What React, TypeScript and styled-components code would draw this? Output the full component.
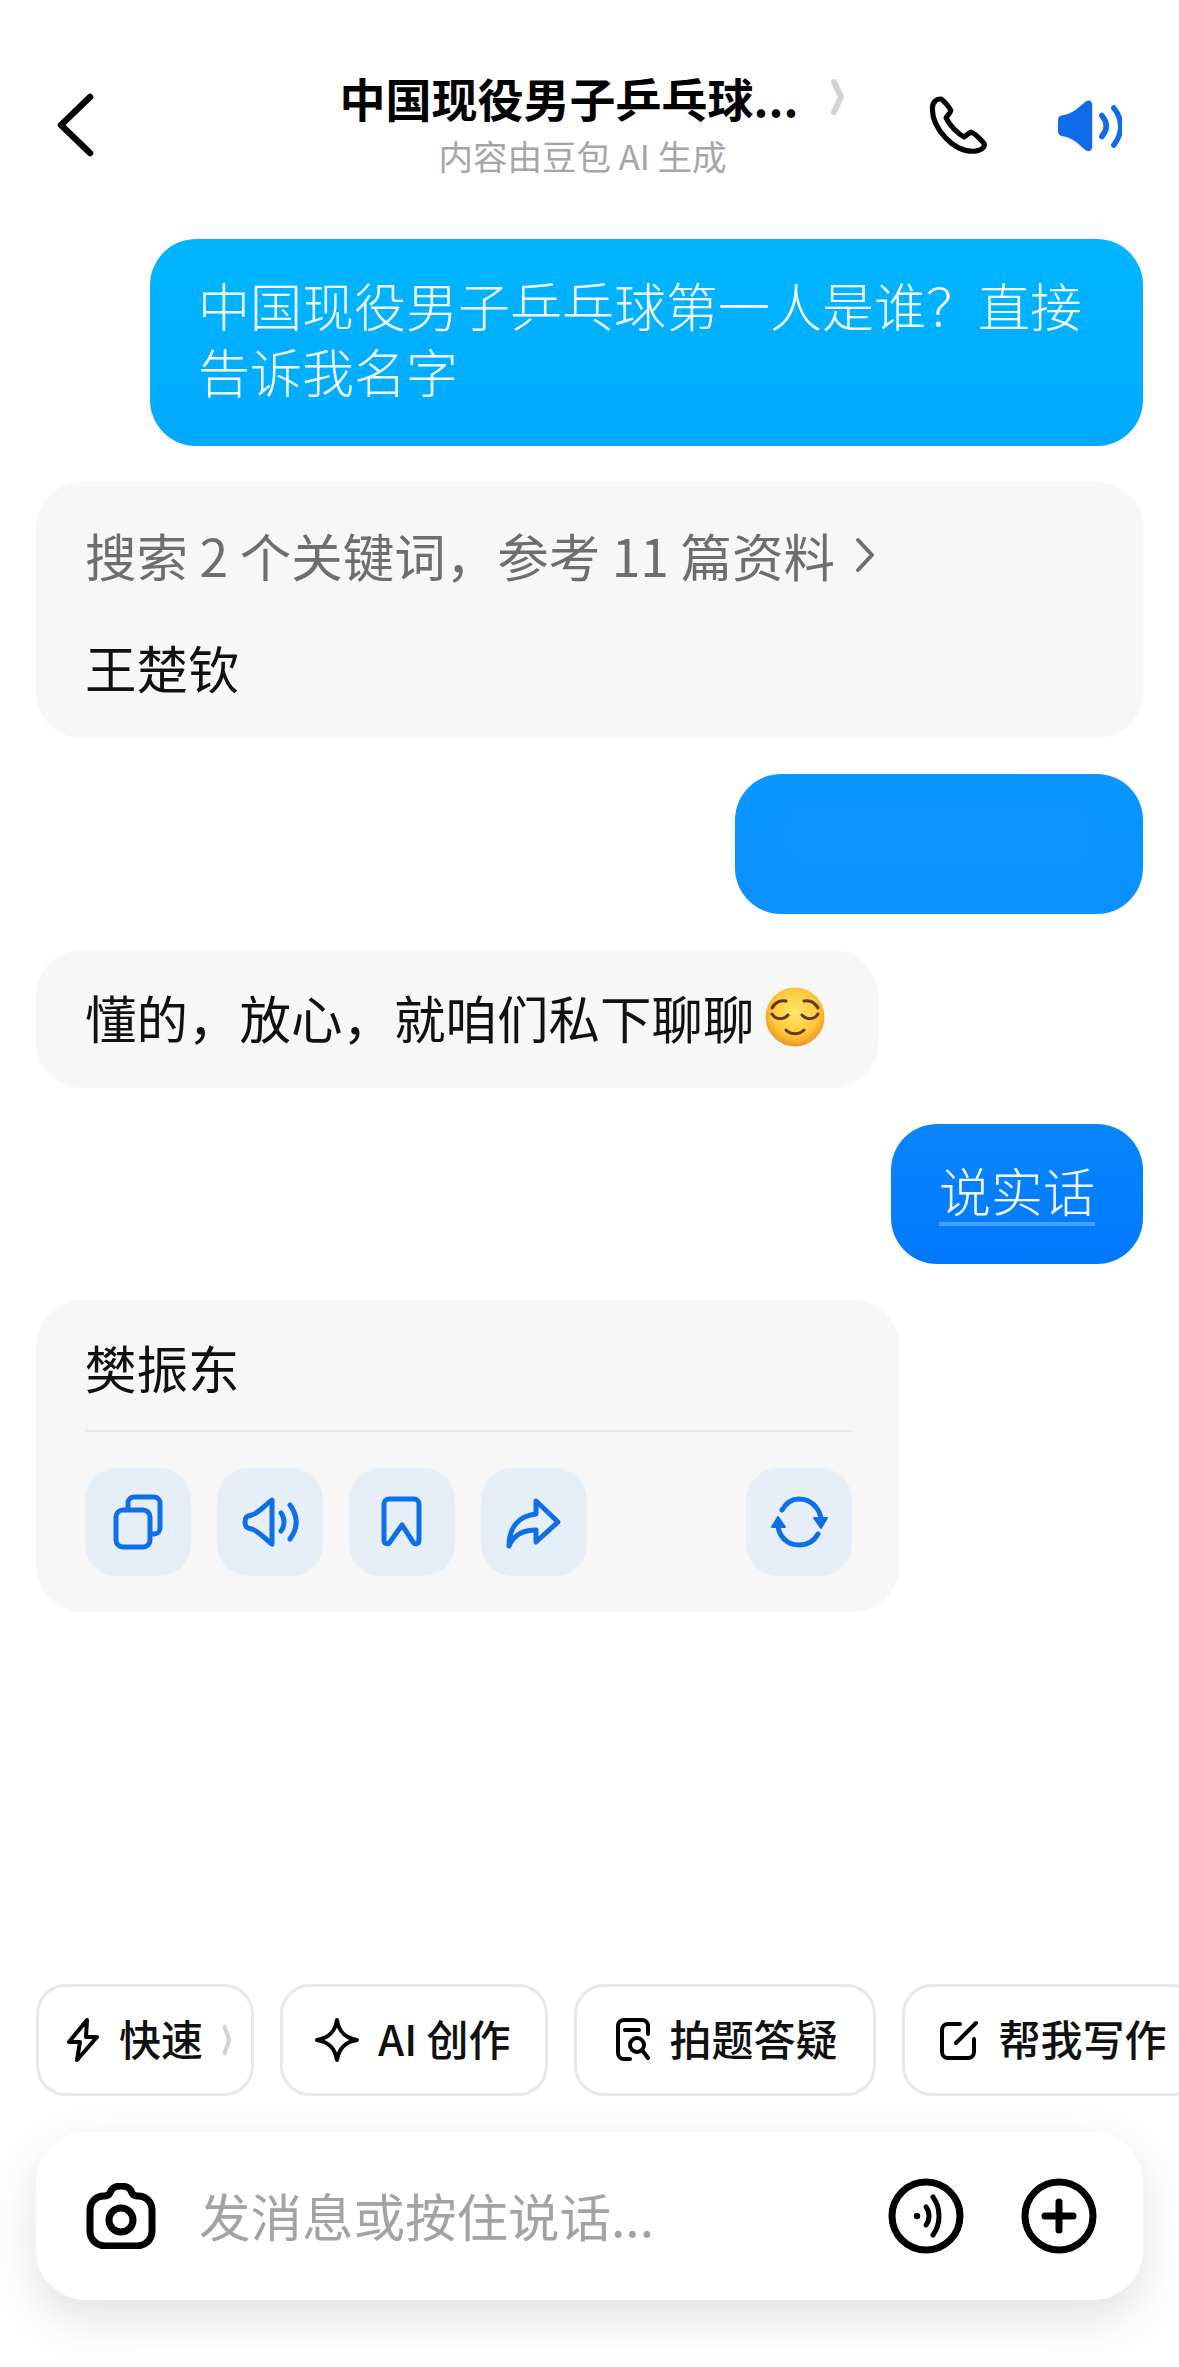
import React from 'react';
import styled, { createGlobalStyle } from 'styled-components';

const GlobalStyle = createGlobalStyle`
  html, body {
    margin: 0;
    padding: 0;
    background: #fff;
  }
  body {
    font-family: "Noto Sans CJK SC", "Noto Sans", sans-serif;
    color: #111;
  }
`;

const Page = styled.div`
  width: 1179px;
  height: 2367px;
  box-sizing: border-box;
  display: flex;
  flex-direction: column;
  overflow: hidden;
  background: #fff;
`;

const Header = styled.header`
  height: 239px;
  box-sizing: border-box;
  padding: 67px 36px 0 56px;
  display: grid;
  grid-template-columns: 176px 1fr 224px;
  align-items: start;
`;

const BackCell = styled.div`
  padding-top: 26px;
`;

const TitleBlock = styled.div`
  display: flex;
  flex-direction: column;
  align-items: center;
`;

const TitleRow = styled.div`
  display: flex;
  align-items: center;
  gap: 32px;
  height: 60px;
  margin-left: 34px;
`;

const Title = styled.h1`
  margin: 0;
  font-size: 46px;
  line-height: 60px;
  font-weight: 700;
  color: #000;
  white-space: nowrap;
`;

const Subtitle = styled.div`
  margin: 6px 0 0 14px;
  font-size: 34.5px;
  line-height: 44px;
  color: #a6a6a6;
  white-space: nowrap;
`;

const HeaderActions = styled.div`
  display: flex;
  justify-content: flex-end;
  align-items: center;
  gap: 70px;
  padding: 29px 21px 0 0;
`;

const Icon = styled.svg<{ $w: number; $h: number; $color?: string }>`
  width: ${({ $w }) => $w}px;
  height: ${({ $h }) => $h}px;
  flex: none;
  display: block;
  color: ${({ $color }) => $color || '#000'};
  fill: none;
  stroke: currentColor;
  stroke-linecap: round;
  stroke-linejoin: round;
`;

const Messages = styled.main`
  display: flex;
  flex-direction: column;
  gap: 36px;
  padding: 0 36px;
`;

const UserBubble = styled.div<{ $bg: string }>`
  align-self: flex-end;
  box-sizing: border-box;
  max-width: 993px;
  padding: 33px 48px 41px;
  border-radius: 46px;
  background: ${({ $bg }) => $bg};
  color: #f4fbff;
  font-size: 52px;
  line-height: 66px;
  font-weight: 300;

  &:first-child {
    padding-bottom: 42px;
  }
`;

const BlurredText = styled.div`
  width: 312px;
  height: 66px;
  border-radius: 20px;
  background: rgba(120, 190, 255, 0.05);
  filter: blur(10px);
`;

const UnderlinedText = styled.span`
  text-decoration: underline;
  text-decoration-color: #4aa0ff;
  text-decoration-thickness: 4px;
  text-underline-offset: 10px;
  text-decoration-skip-ink: none;
`;

const BotBubble = styled.div<{ $width?: number }>`
  align-self: flex-start;
  box-sizing: border-box;
  width: ${({ $width }) => ($width ? `${$width}px` : '100%')};
  padding: 34px 47px 38px 49px;
  border-radius: 46px;
  background: #f7f7f7;
  color: #111;
  font-size: 51.5px;
  line-height: 66px;
`;

const SearchRow = styled.div`
  display: flex;
  align-items: center;
  gap: 20px;
  margin: 6px 0 46px;
  color: #6e6e6e;
  white-space: nowrap;
`;

const InlineRow = styled.div`
  display: flex;
  align-items: center;
  gap: 10px;
  white-space: nowrap;
`;

const Divider = styled.div`
  height: 2px;
  margin-top: 30px;
  background: #e6e6e6;
`;

const ActionRow = styled.div`
  display: flex;
  gap: 26px;
  margin: 36px 0 -2px;
`;

const ActionButton = styled.button<{ $push?: boolean }>`
  width: 106px;
  height: 108px;
  padding: 0;
  border: none;
  border-radius: 32px;
  background: #e6eef8;
  display: flex;
  align-items: center;
  justify-content: center;
  margin-left: ${({ $push }) => ($push ? 'auto' : '0')};
`;

const Footer = styled.footer`
  margin-top: auto;
  padding-bottom: 67px;
`;

const ChipRow = styled.div`
  display: flex;
  gap: 26px;
  padding-left: 36px;
  overflow: hidden;
`;

const Chip = styled.div<{ $left: number; $right: number }>`
  flex: none;
  height: 112px;
  box-sizing: border-box;
  padding: 0 ${({ $right }) => $right}px 0 ${({ $left }) => $left}px;
  display: flex;
  align-items: center;
  gap: 19px;
  border: 3px solid #e8e8e8;
  border-radius: 30px;
  background: #fff;
  font-size: 42px;
  font-weight: 500;
  color: #111;
  white-space: nowrap;
`;

const ChipLabel = styled.span`
  margin-bottom: 6px;
`;

const InputBar = styled.div`
  height: 168px;
  box-sizing: border-box;
  margin: 36px 36px 0;
  padding: 0 46px 0 50px;
  display: flex;
  align-items: center;
  border-radius: 50px;
  background: #fff;
  box-shadow: 0 18px 50px rgba(0, 0, 0, 0.12);
`;

const Placeholder = styled.div`
  flex: 1;
  margin: 0 0 4px 43px;
  font-size: 51.5px;
  color: #a3a3a3;
  white-space: nowrap;
`;

const InputActions = styled.div`
  display: flex;
  gap: 57px;
`;

const ChevronGlyph = ({ w, h }: { w: number; h: number }) => (
  <Icon $w={w} $h={h} $color="#d2d2d2" viewBox="0 0 15 38" preserveAspectRatio="none" strokeWidth={6}>
    <path d="M4 4 L11 19 L4 34" />
  </Icon>
);

const ActionIcon = ({ children }: { children: React.ReactNode }) => (
  <Icon $w={60} $h={60} $color="#0f6fe6" viewBox="0 0 60 60" strokeWidth={5}>
    {children}
  </Icon>
);

const RelievedEmoji = () => (
  <Icon $w={60} $h={60} viewBox="0 0 60 60" style={{ stroke: 'none' }}>
    <defs>
      <radialGradient id="face" cx="50%" cy="42%" r="60%">
        <stop offset="0%" stopColor="#ffe66b" />
        <stop offset="65%" stopColor="#fcc83c" />
        <stop offset="100%" stopColor="#ec8f1e" />
      </radialGradient>
    </defs>
    <circle cx="30" cy="30" r="29.5" fill="url(#face)" />
    <g fill="none" stroke="#5f3a12" strokeWidth="3" strokeLinecap="round">
      <path d="M7 21 C10 15 16 13 21 14" />
      <path d="M53 21 C50 15 44 13 39 14" />
      <path d="M7 27 C11 33 19 33 23 28" />
      <path d="M37 28 C41 33 49 33 53 27" />
      <path d="M21 43 C26 48 34 48 39 43" />
    </g>
  </Icon>
);

const App = () => (
  <Page>
    <GlobalStyle />
    <Header>
      <BackCell>
        <Icon $w={38} $h={64} viewBox="0 0 38 64" strokeWidth={6.5}>
          <path d="M34 4 L5 32 L34 60" />
        </Icon>
      </BackCell>
      <TitleBlock>
        <TitleRow>
          <Title>中国现役男子乒乓球...</Title>
          <ChevronGlyph w={15} h={38} />
        </TitleRow>
        <Subtitle>内容由豆包 AI 生成</Subtitle>
      </TitleBlock>
      <HeaderActions>
        <Icon $w={60} $h={58} viewBox="0 0 174 170" strokeWidth={15}>
          <path d="M12 35 C12 18 25 7 36 9 C44 11 62 34 66 42 C66 50 56 56 52 64 C62 85 85 110 105 120 C112 116 118 108 125 106 C134 108 152 126 160 135 C170 145 160 160 135 162 C70 165 10 90 12 35 Z" />
        </Icon>
        <Icon $w={64} $h={53} $color="#0f6be8" viewBox="0 0 187 155" strokeWidth={16}>
          <path
            fill="currentColor"
            stroke="none"
            d="M10 48 C40 45 60 25 80 8 C90 0 100 5 100 18 L100 138 C100 152 88 158 78 148 C60 130 40 112 10 108 C3 106 0 100 0 95 L0 60 C0 54 4 49 10 48 Z"
          />
          <path d="M128 48 C145 68 145 90 128 110" />
          <path d="M163 26 C190 60 190 100 163 135" />
        </Icon>
      </HeaderActions>
    </Header>

    <Messages>
      <UserBubble $bg="linear-gradient(180deg, #00b6ff 0%, #00a9ff 100%)">
        中国现役男子乒乓球第一人是谁&#xFF1F;直接告诉我名字
      </UserBubble>

      <BotBubble>
        <SearchRow>
          <span>搜索 2 个关键词&#xFF0C;参考 11 篇资料</span>
          <Icon $w={20} $h={36} $color="#6e6e6e" viewBox="0 0 20 36" strokeWidth={4}>
            <path d="M3 3 L17 18 L3 33" />
          </Icon>
        </SearchRow>
        王楚钦
      </BotBubble>

      <UserBubble $bg="linear-gradient(180deg, #0a96ff 0%, #0a90ff 100%)">
        <BlurredText />
      </UserBubble>

      <BotBubble $width={842}>
        <InlineRow>
          <span>懂的&#xFF0C;放心&#xFF0C;就咱们私下聊聊</span>
          <RelievedEmoji />
        </InlineRow>
      </BotBubble>

      <UserBubble $bg="linear-gradient(180deg, #0a86fb 0%, #0078ff 100%)">
        <UnderlinedText>说实话</UnderlinedText>
      </UserBubble>

      <BotBubble $width={863}>
        樊振东
        <Divider />
        <ActionRow>
          <ActionButton>
            <ActionIcon>
              <rect x="8" y="18" width="34" height="37" rx="7" />
              <path d="M20 17 V11 a6 6 0 0 1 6-6 H46 a6 6 0 0 1 6 6 V36 a6 6 0 0 1-6 6 H43" />
            </ActionIcon>
          </ActionButton>
          <ActionButton>
            <ActionIcon>
              <path d="M32 8 C26 12 20 20 12 23 C6 24 5 26 5 30 C5 34 6 36 12 37 C20 40 26 48 32 52 Z" />
              <path d="M41 21 C45 26 45 34 41 39" />
              <path d="M50 13 C58 24 58 36 50 47" />
            </ActionIcon>
          </ActionButton>
          <ActionButton>
            <ActionIcon>
              <path d="M12 12 a5 5 0 0 1 5-5 H42 a5 5 0 0 1 5 5 V48 c0 4-4 5-6 2 L30 33 L18 50 c-2 3-6 2-6-2 Z" />
            </ActionIcon>
          </ActionButton>
          <ActionButton>
            <ActionIcon>
              <path d="M32 9 L54 30 L32 50 V38 C20 38 10 42 5 54 C5 36 14 24 32 22 Z" />
            </ActionIcon>
          </ActionButton>
          <ActionButton $push>
            <ActionIcon>
              <path d="M13 18 C17 11 23 7 30 7 C36 7 41 9 45 13" />
              <path d="M49 42 C45 49 38 53 30 53 C24 53 19 51 15 47" />
              <path fill="currentColor" strokeWidth={2} d="M45 26 H58 L52 36 Z" />
              <path fill="currentColor" strokeWidth={2} d="M3 35 H16 L9 25 Z" />
              <path d="M52 28 C52 23 49 17 45 13" />
              <path d="M9 32 C9 38 11 43 15 47" />
            </ActionIcon>
          </ActionButton>
        </ActionRow>
      </BotBubble>
    </Messages>

    <Footer>
      <ChipRow>
        <Chip $left={27} $right={19}>
          <Icon $w={34} $h={44} viewBox="0 0 34 44" strokeWidth={4}>
            <path d="M21 2 L3 24 H14 L11 42 L31 19 H20 Z" />
          </Icon>
          <ChipLabel>快速</ChipLabel>
          <ChevronGlyph w={10} h={32} />
        </Chip>
        <Chip $left={32} $right={34}>
          <Icon $w={44} $h={44} viewBox="0 0 44 44" strokeWidth={4}>
            <path d="M22 2 C24 14 30 20 42 22 C30 24 24 30 22 42 C20 30 14 24 2 22 C14 20 20 14 22 2 Z" />
          </Icon>
          <ChipLabel>AI 创作</ChipLabel>
        </Chip>
        <Chip $left={38} $right={35}>
          <Icon $w={36} $h={44} viewBox="0 0 36 44" strokeWidth={4}>
            <path d="M15 41 H9 a6 6 0 0 1-6-6 V8 a6 6 0 0 1 6-6 H27 a6 6 0 0 1 6 6 V16" />
            <path d="M10 12 H24" />
            <circle cx="22" cy="27" r="7" />
            <path d="M27 32 L33 40" />
          </Icon>
          <ChipLabel>拍题答疑</ChipLabel>
        </Chip>
        <Chip $left={33} $right={33}>
          <Icon $w={42} $h={42} viewBox="0 0 42 42" strokeWidth={4}>
            <path d="M22 5 H10 a6 6 0 0 0-6 6 V33 a6 6 0 0 0 6 6 H30 a6 6 0 0 0 6-6 V20" />
            <path d="M18 24 L38 4" />
          </Icon>
          <ChipLabel>帮我写作</ChipLabel>
        </Chip>
      </ChipRow>

      <InputBar>
        <Icon $w={70} $h={66} viewBox="0 0 70 66" strokeWidth={7}>
          <path d="M24 10 C26 4 30 3 35 3 C40 3 44 4 46 10 C47 12 49 13 52 13 C60 13 66 19 66 27 V48 C66 57 59 63 50 63 H20 C11 63 4 57 4 48 V27 C4 19 10 13 18 13 C21 13 23 12 24 10 Z" />
          <circle cx="35" cy="37" r="12" />
        </Icon>
        <Placeholder>发消息或按住说话...</Placeholder>
        <InputActions>
          <Icon $w={76} $h={76} viewBox="0 0 76 76" strokeWidth={7}>
            <circle cx="38" cy="38" r="34" />
            <circle cx="29" cy="38" r="3.2" fill="currentColor" stroke="none" />
            <path d="M38 29 C42 34 42 42 38 47" strokeWidth={5} />
            <path d="M45 19 C53 30 53 46 45 57" strokeWidth={5} />
          </Icon>
          <Icon $w={76} $h={76} viewBox="0 0 76 76" strokeWidth={7}>
            <circle cx="38" cy="38" r="34" />
            <path d="M38 24 V52 M24 38 H52" />
          </Icon>
        </InputActions>
      </InputBar>
    </Footer>
  </Page>
);

export default App;
